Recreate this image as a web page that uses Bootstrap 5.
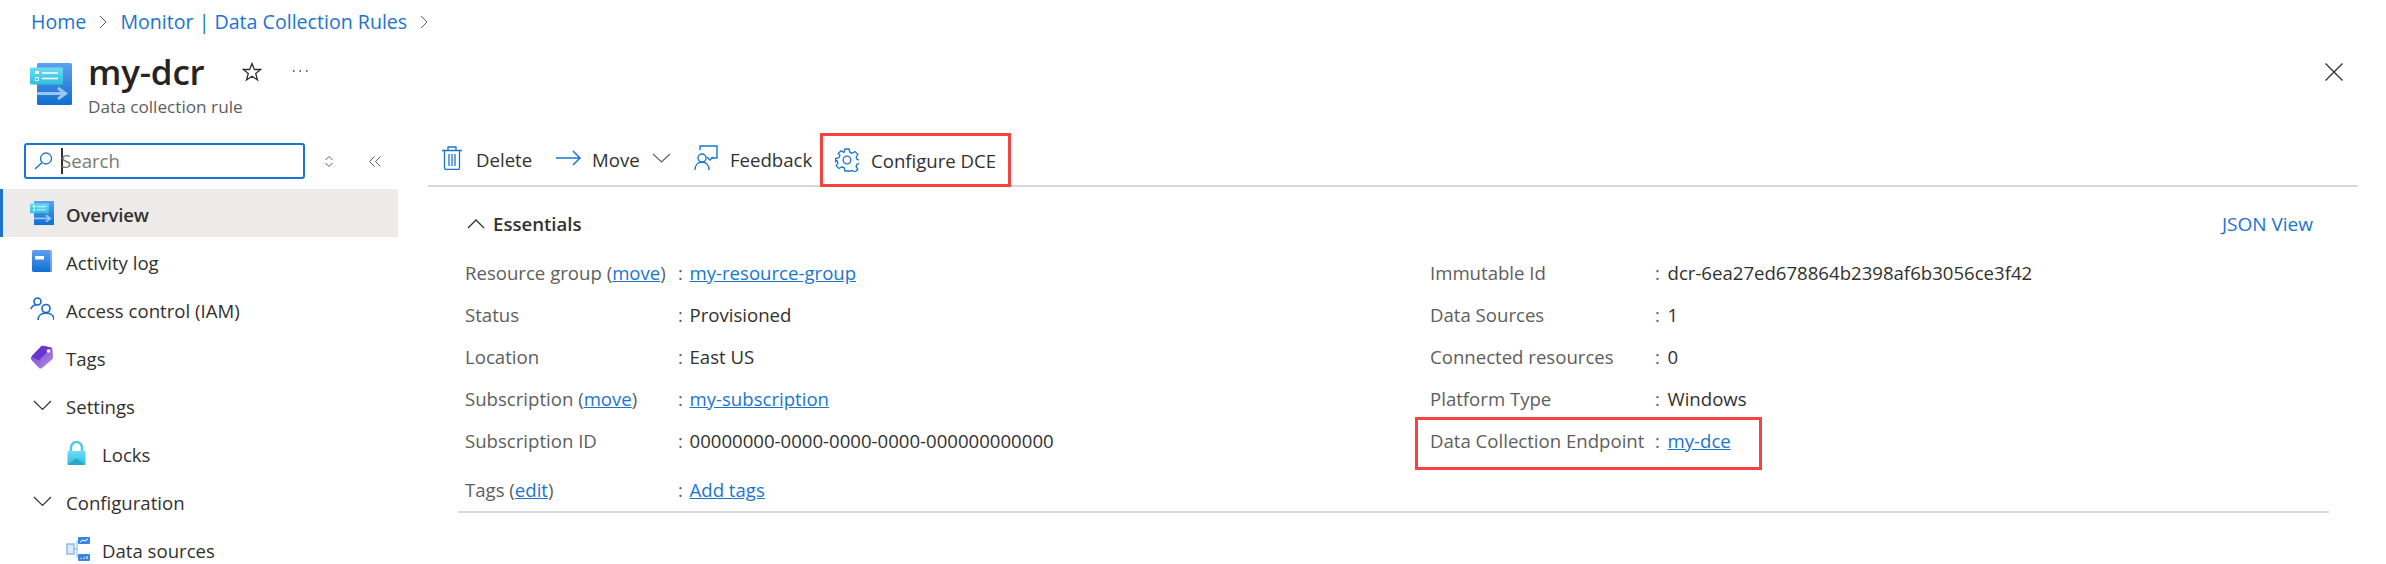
<!DOCTYPE html>
<html lang="en">
<head>
    <meta charset="UTF-8">
    <title>my-dcr</title>
    <link href="https://cdn.jsdelivr.net/npm/bootstrap@5.3.2/dist/css/bootstrap.min.css" rel="stylesheet">
    <style>
        body { background: #fff; color: #323130; font-family: "Open Sans", "Noto Sans", sans-serif; font-size: 18.6px; overflow: hidden; height: 564px; }
        a { color: #1b75d0; }
        svg { display: block; flex: none; }
        .crumbs { height: 44px; padding-left: 31px; gap: 13px; font-size: 19.6px; }
        .crumbs a { text-decoration: none; }
        .page-head { height: 88px; padding: 19px 43px 0 30px; }
        .page-title { font-size: 35px; font-weight: 600; line-height: 46px; margin: -14px 0 0; color: #252423; letter-spacing: -0.2px; }
        .page-sub { color: #605e5c; line-height: 24px; font-size: 17.2px; }
        .title-wrap { margin-left: 16px; }
        .star-ico { margin: -14px 0 0 38px; }
        .dots-ico { margin: -14px 0 0 30px; }
        .side { width: 398px; flex: none; }
        .search-row { padding: 11px 0 10px 24px; height: 57px; }
        .search-box { width: 281px; height: 36px; border: 2px solid #1b75d0; border-radius: 3px; padding-left: 8px; }
        .search-caret { width: 2px; height: 26px; background: #323130; margin-left: 8px; }
        .search-box input { border: 0; outline: 0; padding: 0; width: 200px; font-size: 18.6px; margin-left: -2px; background: transparent; }
        .search-box input::placeholder { color: #7a7876; opacity: 1; }
        .updown-ico { margin-left: 19px; }
        .collapse-ico { margin-left: 35px; }
        .side-item { height: 48px; padding-left: 30px; width: 398px; }
        .side-item .ico-slot { width: 24px; margin-right: 12px; }
        .side-item .side-text { padding-top: 4px; }
        .side-item.sub { padding-left: 66px; }
        .side-item.active { background: #edebe9; border-left: 3px solid #1b75d0; padding-left: 27px; font-weight: 600; letter-spacing: -0.2px; }
        .chev-ico { margin-left: 3px; }
        .main-pane { width: 1930px; margin-left: 30px; }
        .tool-bar { height: 55px; border-bottom: 2px solid #d8d8d8; padding-left: 14px; }
        .tool-btn { gap: 14px; }
        .tool-btn span, .tool-red span { padding-top: 2px; }
        .tool-del { width: 112px; }
        .tool-move { width: 140px; gap: 11px; padding-left: 2px; }
        .tool-chev { margin-left: 1px; }
        .tool-feed { width: 126px; gap: 12px; }
        .tool-red { border: 3px solid #f44343; width: 191px; height: 54px; padding: 0 0 0 12px; margin-top: 2px; gap: 12px; }
        .ess-wrap { margin: 0 29px 0 30px; border-bottom: 2px solid #d8d8d8; }
        .ess-head { height: 30px; margin-top: 22px; margin-bottom: 13px; padding: 0 16px 0 9px; font-weight: 600; }
        .ess-head a { font-weight: 400; text-decoration: none; font-size: 19px; }
        .ess-col { padding-left: 7px; }
        .ess-col.one { width: 965px; }
        .ess-line { height: 42px; }
        .ess-line.gap-top { margin-top: 7px; }
        .lbl { color: #605e5c; }
        .one .lbl { width: 213px; }
        .two .lbl { width: 225px; }
        .sep { width: 11.5px; color: #605e5c; }
        .two .sep { width: 12.5px; }
        .red-mark { position: absolute; left: -15px; top: -3px; width: 347px; height: 53px; border: 3px solid #f44343; pointer-events: none; }
    </style>
</head>
<body>
<svg width="0" height="0" style="position:absolute">
    <defs>
        <linearGradient id="blueGrad" x1="0" y1="0" x2="0" y2="1">
            <stop offset="0" stop-color="#5ea0ef"/>
            <stop offset="1" stop-color="#0f6fd0"/>
        </linearGradient>
        <linearGradient id="cyanGrad" x1="0" y1="0" x2="0" y2="1">
            <stop offset="0" stop-color="#6bdcf5"/>
            <stop offset="1" stop-color="#32bedd"/>
        </linearGradient>
        <linearGradient id="purpleGrad" x1="0" y1="0" x2="1" y2="1">
            <stop offset="0" stop-color="#7b3fd6"/>
            <stop offset="1" stop-color="#b08fe0"/>
        </linearGradient>
        <symbol id="dcrIcon" viewBox="0 0 42 42">
            <rect x="7" y="0" width="35" height="42" rx="1.5" fill="url(#blueGrad)"/>
            <rect x="0" y="4.500" width="33" height="17" rx="1" fill="url(#cyanGrad)"/>
            <rect x="5" y="8" width="4" height="3" fill="#fff"/>
            <rect x="5.500" y="14.500" width="3" height="3" fill="none" stroke="#fff" stroke-width="0.8"/>
            <path d="M12 10h16M12 15.500h16" stroke="#fff" stroke-width="1.300"/>
            <path d="M7 30.500h28M28 25l7.500 5.500-7.500 5.500" fill="none" stroke="#9cc4f5" stroke-width="3"/>
        </symbol>
    </defs>
</svg>

<nav class="crumbs d-flex align-items-center">
    <a href="#">Home</a>
    <svg width="8" height="14" viewBox="0 0 8 14"><path d="M1 1l6 6-6 6" fill="none" stroke="#605e5c" stroke-width="1"/></svg>
    <a href="#">Monitor | Data Collection Rules</a>
    <svg width="8" height="14" viewBox="0 0 8 14"><path d="M1 1l6 6-6 6" fill="none" stroke="#605e5c" stroke-width="1"/></svg>
</nav>

<header class="page-head d-flex align-items-start">
    <svg width="42" height="42"><use href="#dcrIcon"/></svg>
    <div class="title-wrap">
        <div class="d-flex align-items-center">
            <h1 class="page-title">my-dcr</h1>
            <svg class="star-ico" width="20" height="20" viewBox="0 0 20 20"><path d="M10 1.500l2.400 6h6.300l-5 4 1.800 6.500-5.500-3.800-5.500 3.800 1.800-6.500-5-4h6.300z" fill="none" stroke="#323130" stroke-width="1.300"/></svg>
            <svg class="dots-ico" width="16" height="4" viewBox="0 0 16 4"><path d="M1 1h1.500M7.500 1H9M14 1h1.500" stroke="#323130" stroke-width="1.500"/></svg>
        </div>
        <div class="page-sub">Data collection rule</div>
    </div>
    <svg class="ms-auto" width="18" height="18" viewBox="0 0 18 18"><path d="M.5.500l17 17M17.500.500l-17 17" stroke="#323130" stroke-width="1.300"/></svg>
</header>

<div class="d-flex">
    <!-- Sidebar -->
    <aside class="side">
        <div class="search-row d-flex align-items-center">
            <div class="search-box d-flex align-items-center">
                <svg width="19" height="18" viewBox="0 0 19 18"><circle cx="12" cy="6.500" r="5.500" fill="none" stroke="#1b75d0" stroke-width="1.300"/><path d="M8 10.500L1 17" stroke="#1b75d0" stroke-width="1.500"/></svg>
                <span class="search-caret"></span>
                <input type="text" placeholder="Search">
            </div>
            <svg class="updown-ico" width="10" height="13" viewBox="0 0 10 13"><path d="M1.500 5L5 1.500 8.500 5M1.500 8L5 11.500 8.500 8" fill="none" stroke="#605e5c" stroke-width="1"/></svg>
            <svg class="collapse-ico" width="12" height="11" viewBox="0 0 12 11"><path d="M5.500.500l-5 5 5 5M11.500.500l-5 5 5 5" fill="none" stroke="#605e5c" stroke-width="1"/></svg>
        </div>
        <div class="side-item active d-flex align-items-center">
            <span class="ico-slot"><svg width="24" height="24"><use href="#dcrIcon"/></svg></span><span class="side-text">Overview</span>
        </div>
        <div class="side-item d-flex align-items-center">
            <span class="ico-slot"><svg width="24" height="24" viewBox="0 0 24 24"><path d="M2 2.500Q2 1 4 1h16a2 2 0 0 1 2 2v19a1 1 0 0 1-1 1H4q-2 0-2-1.500z" fill="url(#blueGrad)"/><rect x="5" y="7" width="9" height="3.500" fill="#fff"/><path d="M21 1v22" stroke="#a8cdf5" stroke-width="1"/></svg></span><span class="side-text">Activity log</span>
        </div>
        <div class="side-item d-flex align-items-center">
            <span class="ico-slot"><svg width="24" height="24" viewBox="0 0 24 24" fill="none" stroke="#1565d0" stroke-width="1.600"><circle cx="7.500" cy="4.500" r="3.500"/><path d="M1 12c1-3 3-4 5-4"/><circle cx="16" cy="11.500" r="4"/><path d="M8 23c0-4 3-7 8-7s8 3 8 7"/></svg></span><span class="side-text">Access control (IAM)</span>
        </div>
        <div class="side-item d-flex align-items-center">
            <span class="ico-slot"><svg width="24" height="24" viewBox="0 0 24 24"><path d="M1.500 11.500L11 1.500q1-1 2.500-.5l8 1.500q1 .5 1 1.500l.5 8q0 1.500-1 2.500L12 23q-1.500 1-3 0L1.500 15q-1.500-2 0-3.500z" fill="url(#purpleGrad)"/><path d="M1.500 11.500L11 1.500q1-1 2.500-.5l8 1.500L9 15.500z" fill="#6a34cf"/><circle cx="18.500" cy="6" r="1.800" fill="#fff"/></svg></span><span class="side-text">Tags</span>
        </div>
        <div class="side-item d-flex align-items-center">
            <span class="ico-slot"><svg class="chev-ico" width="19" height="11" viewBox="0 0 19 11"><path d="M1 1l8.500 8.500L18 1" fill="none" stroke="#323130" stroke-width="1.200"/></svg></span><span class="side-text">Settings</span>
        </div>
        <div class="side-item sub d-flex align-items-center">
            <span class="ico-slot"><svg width="21" height="24" viewBox="0 0 21 24"><path d="M5 11V6.500a5.500 5.500 0 0 1 11 0V11" fill="none" stroke="#50c8e8" stroke-width="2.500"/><rect x="1.500" y="10" width="18" height="14" rx="1" fill="url(#cyanGrad)"/><path d="M1.500 24l9-7 9 7z" fill="#2ba6c8"/></svg></span><span class="side-text">Locks</span>
        </div>
        <div class="side-item d-flex align-items-center">
            <span class="ico-slot"><svg class="chev-ico" width="19" height="11" viewBox="0 0 19 11"><path d="M1 1l8.500 8.500L18 1" fill="none" stroke="#323130" stroke-width="1.200"/></svg></span><span class="side-text">Configuration</span>
        </div>
        <div class="side-item sub d-flex align-items-center">
            <span class="ico-slot"><svg width="24" height="24" viewBox="0 0 24 24"><rect x="1" y="7" width="7" height="10" fill="#dcebfb" stroke="#7db0ee" stroke-width="1.300"/><path d="M8 12h3M11 4v16h2M11 4h2" fill="none" stroke="#7db0ee" stroke-width="1"/><rect x="12" y="0" width="12" height="7" rx="1" fill="#3a86e0"/><rect x="12" y="17" width="12" height="7" rx="1" fill="#3a86e0"/><path d="M14 5l3-2 2 1 3-2" fill="none" stroke="#fff"/><path d="M15 22v-1M18 22v-2M21 22v-3" stroke="#fff"/></svg></span><span class="side-text">Data sources</span>
        </div>
    </aside>

    <!-- Main Content -->
    <main class="main-pane">
        <div class="tool-bar d-flex align-items-center">
            <div class="tool-btn tool-del d-flex align-items-center">
                <svg width="20" height="24" viewBox="0 0 20 24" fill="none" stroke="#1b75d0" stroke-width="1.300"><path d="M0 4.500h20M6 4.500V1h8v3.500M2.500 4.500V22a1.500 1.500 0 0 0 1.500 1.500h12a1.500 1.500 0 0 0 1.500-1.500V4.500M7 8v12M10 8v12M13 8v12"/></svg>
                <span>Delete</span>
            </div>
            <div class="tool-btn tool-move d-flex align-items-center">
                <svg width="25" height="16" viewBox="0 0 25 16" fill="none" stroke="#1b75d0" stroke-width="1.500"><path d="M0 8h24M17 1l7 7-7 7"/></svg>
                <span>Move</span>
                <svg class="tool-chev" width="19" height="10" viewBox="0 0 19 10"><path d="M1 1l8.500 8L18 1" fill="none" stroke="#605e5c" stroke-width="1.100"/></svg>
            </div>
            <div class="tool-btn tool-feed d-flex align-items-center">
                <svg width="24" height="26" viewBox="0 0 24 26" fill="none" stroke="#1b75d0" stroke-width="1.400"><path d="M6 5V1h17v12h-6"/><circle cx="8" cy="13" r="4"/><path d="M1 25c0-5 3-8 7-8s7 3 7 8M13 12l3 3 3-3"/></svg>
                <span>Feedback</span>
            </div>
            <div class="tool-red d-flex align-items-center">
                <svg width="24" height="24" viewBox="0 0 24 24" fill="none" stroke="#1b75d0" stroke-width="1.300"><circle cx="12" cy="12" r="3.800"/><path d="M10 1h4l.8 3.200 2.300 1 2.900-1.700 2.800 2.800-1.700 2.900 1 2.300 3.400.8v3l-3.400.8-1 2.300 1.700 2.900-2.800 2.800-2.900-1.700-2.300 1L14 23h-4l-.8-3.200-2.300-1-2.900 1.700-2.800-2.800 1.700-2.900-1-2.300L.5 13.500v-3l3.400-.8 1-2.300L3.200 5.500 6 2.700l2.900 1.700 .3-.2z"/></svg>
                <span>Configure DCE</span>
            </div>
        </div>

        <section class="ess-wrap">
            <div class="ess-head d-flex align-items-center">
                <svg class="me-2" width="18" height="10" viewBox="0 0 18 10"><path d="M1 9l8-8 8 8" fill="none" stroke="#323130" stroke-width="1.300"/></svg>
                <span>Essentials</span>
                <a class="ms-auto" href="#">JSON View</a>
            </div>
            <div class="d-flex">
                <div class="ess-col one">
                    <div class="ess-line d-flex align-items-center"><span class="lbl">Resource group (<a href="#">move</a>)</span><span class="sep">:</span><a href="#">my-resource-group</a></div>
                    <div class="ess-line d-flex align-items-center"><span class="lbl">Status</span><span class="sep">:</span><span>Provisioned</span></div>
                    <div class="ess-line d-flex align-items-center"><span class="lbl">Location</span><span class="sep">:</span><span>East US</span></div>
                    <div class="ess-line d-flex align-items-center"><span class="lbl">Subscription (<a href="#">move</a>)</span><span class="sep">:</span><a href="#">my-subscription</a></div>
                    <div class="ess-line d-flex align-items-center"><span class="lbl">Subscription ID</span><span class="sep">:</span><span>00000000-0000-0000-0000-000000000000</span></div>
                    <div class="ess-line gap-top d-flex align-items-center"><span class="lbl">Tags (<a href="#">edit</a>)</span><span class="sep">:</span><a href="#">Add tags</a></div>
                </div>
                <div class="ess-col two">
                    <div class="ess-line d-flex align-items-center"><span class="lbl">Immutable Id</span><span class="sep">:</span><span>dcr-6ea27ed678864b2398af6b3056ce3f42</span></div>
                    <div class="ess-line d-flex align-items-center"><span class="lbl">Data Sources</span><span class="sep">:</span><span>1</span></div>
                    <div class="ess-line d-flex align-items-center"><span class="lbl">Connected resources</span><span class="sep">:</span><span>0</span></div>
                    <div class="ess-line d-flex align-items-center"><span class="lbl">Platform Type</span><span class="sep">:</span><span>Windows</span></div>
                    <div class="ess-line position-relative d-flex align-items-center"><span class="lbl">Data Collection Endpoint</span><span class="sep">:</span><a href="#">my-dce</a><span class="red-mark"></span></div>
                </div>
            </div>
        </section>
    </main>
</div>

<script src="https://cdn.jsdelivr.net/npm/bootstrap@5.3.2/dist/js/bootstrap.bundle.min.js"></script>
</body>
</html>
